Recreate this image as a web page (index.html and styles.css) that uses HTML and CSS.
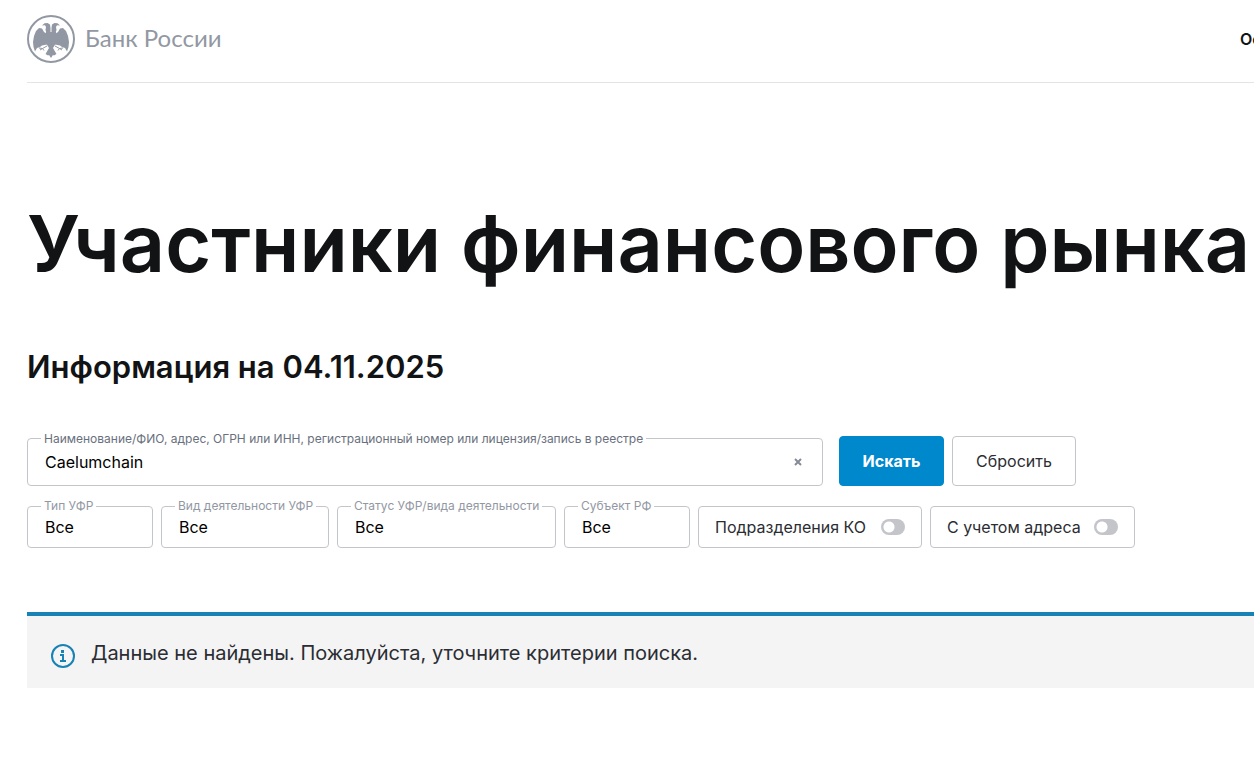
FILE: index.html
```html
<!DOCTYPE html>
<html lang="ru">
<head>
    <meta charset="UTF-8">
    <meta name="viewport" content="width=device-width, initial-scale=1.0">
    <title>Участники финансового рынка | Банк России</title>
    <link rel="stylesheet" href="styles.css">
</head>
<body>

    <header class="header">
        <a class="logo" href="#">
            <svg class="logo-icon" viewBox="0 0 48 48" aria-hidden="true">
                <circle cx="24" cy="24" r="23" fill="none" stroke="#9298a3" stroke-width="2"/>
                <g fill="#9298a3">
                    <!-- heads -->
                    <path d="M23.500 21V13l-.5-3.500-2.500-1.500-3 .2-2.500 2.300 3-.2 1 1.700-.5 3 2 6zM24.500 21V13l.5-3.500 2.500-1.500 3 .2 2.500 2.300-3-.2-1 1.700.5 3-2 6z"/>
                    <!-- wings -->
                    <path d="M20 19l-3-2-2-3.500-3-.5-3 3-2 5-1 6 .5 5 1.500 4.500 2-3.500 3-1 2-1.500 5-1zM28 19l3-2 2-3.500 3-.5 3 3 2 5 1 6-.5 5-1.500 4.500-2-3.500-3-1-2-1.500-5-1z"/>
                    <!-- body and tail -->
                    <path d="M19 17h10l1 6-1.500 6-2.500 4 3.500 6-2.500 1.500-1-.5-2 3-2-3-1 .5-2.500-1.500 3.500-6-2.500-4-1.500-6z"/>
                </g>
                <path d="M20 31l-4.500 2.500-3.500-.5M15.500 33.500L13 35M15.500 33.500l1.500 2M28 31l4.500 2.500 3.500-.5M32.500 33.500l2.500 1.500M32.500 33.500l-1.500 2" fill="none" stroke="#9298a3"/>
            </svg>
            <span class="logo-text">Банк России</span>
        </a>
        <nav class="nav">
            <a href="#">Ос</a>
        </nav>
    </header>

    <main>
        <h1>Участники финансового рынка</h1>
        <h2>Информация на 04.11.2025</h2>

        <form class="filter">
            <div class="search-row">
                <div class="field field-search">
                    <label for="search">Наименование/ФИО, адрес, ОГРН или ИНН, регистрационный номер или лицензия/запись в реестре</label>
                    <input type="text" id="search" value="Caelumchain">
                    <button type="button" class="clear" aria-label="Очистить">
                        <svg viewBox="0 0 8 8" width="8" height="8"><path d="M1 1l6 6M7 1L1 7" stroke="#858a97" stroke-width="2"/></svg>
                    </button>
                </div>
                <button type="submit" class="btn btn-primary">Искать</button>
                <button type="reset" class="btn">Сбросить</button>
            </div>

            <div class="options-row">
                <div class="field field-small">
                    <label for="type">Тип УФР</label>
                    <select id="type"><option>Все</option></select>
                </div>
                <div class="field field-medium">
                    <label for="activity">Вид деятельности УФР</label>
                    <select id="activity"><option>Все</option></select>
                </div>
                <div class="field field-large">
                    <label for="status">Статус УФР/вида деятельности</label>
                    <select id="status"><option>Все</option></select>
                </div>
                <div class="field field-small">
                    <label for="region">Субъект РФ</label>
                    <select id="region"><option>Все</option></select>
                </div>
                <label class="toggle toggle-wide">Подразделения КО <input type="checkbox"></label>
                <label class="toggle">С учетом адреса <input type="checkbox"></label>
            </div>
        </form>

        <div class="message">
            <svg class="message-icon" viewBox="0 0 24 24" aria-hidden="true">
                <circle cx="12" cy="12" r="11" fill="none" stroke="#1782b5" stroke-width="2"/>
                <path d="M10 6h3v3h-3zM9 10h4v6h2v2H9v-2h2v-4H9z" fill="#1782b5"/>
            </svg>
            <p>Данные не найдены. Пожалуйста, уточните критерии поиска.</p>
        </div>
    </main>

</body>
</html>
```

FILE: styles.css
```css
* {
    box-sizing: border-box;
}

body {
    margin: 0;
    padding-left: 27px;
    background-color: #fff;
    color: #111315;
    font-family: Inter, "Noto Sans", sans-serif;
    font-size: 16px;
    overflow-x: hidden;
}

.header {
    display: flex;
    align-items: center;
    justify-content: space-between;
    height: 83px;
    padding-bottom: 5px;
    border-bottom: 1px solid #e3e4e6;
}

.logo {
    display: flex;
    align-items: center;
    gap: 10px;
    color: #9298a3;
    text-decoration: none;
}

.logo-icon {
    width: 48px;
    height: 48px;
}

.logo-text {
    padding-bottom: 2px;
    font-family: Lato, sans-serif;
    font-size: 24px;
    line-height: 32px;
}

.nav {
    width: 14px;
    overflow: hidden;
    white-space: nowrap;
}

.nav a {
    color: #111315;
    font-size: 16px;
    font-weight: 600;
    text-decoration: none;
}

h1 {
    margin: 112px 0 0;
    font-size: 79px;
    font-weight: 600;
    line-height: 96px;
    white-space: nowrap;
}

h2 {
    margin: 56px 0 49px;
    font-size: 31px;
    font-weight: 600;
    line-height: 40px;
}

.search-row,
.options-row {
    display: flex;
    gap: 8px;
}

.search-row {
    align-items: flex-end;
    max-width: 1049px;
}

.options-row {
    flex-wrap: wrap;
    margin-top: 20px;
}

.field {
    position: relative;
    height: 42px;
}

.field-search {
    flex: 1;
    height: 48px;
    margin-right: 8px;
}

.field-small {
    width: 126px;
}

.field-medium {
    width: 168px;
}

.field-large {
    width: 219px;
}

.field label {
    position: absolute;
    top: -8px;
    left: 14px;
    padding: 0 3px;
    background-color: #fff;
    color: #9298a3;
    font-size: 12px;
    line-height: 16px;
    white-space: nowrap;
}

.field-search label {
    top: -7px;
    color: #69707d;
}

.field input,
.field select {
    width: 100%;
    height: 100%;
    padding: 0 17px;
    border: 1px solid #c4c5ca;
    border-radius: 4px;
    background-color: #fff;
    color: #000;
    font: inherit;
    appearance: none;
}

.clear {
    position: absolute;
    top: 12px;
    right: 13px;
    display: flex;
    align-items: center;
    justify-content: center;
    width: 24px;
    height: 24px;
    padding: 0;
    border: none;
    background: none;
    cursor: pointer;
}

.btn {
    width: 124px;
    height: 50px;
    padding: 0;
    border: 1px solid #c4c5ca;
    border-radius: 4px;
    background-color: #fff;
    color: #2b2d33;
    font: inherit;
    cursor: pointer;
}

.btn-primary {
    width: 105px;
    border-color: #0088cd;
    background-color: #0088cd;
    color: #fff;
    font-weight: 700;
}

.toggle {
    display: flex;
    align-items: center;
    justify-content: space-between;
    width: 205px;
    height: 42px;
    padding: 0 16px;
    border: 1px solid #c4c5ca;
    border-radius: 4px;
    color: #2b2d33;
    white-space: nowrap;
    cursor: pointer;
}

.toggle-wide {
    width: 224px;
}

.toggle input {
    width: 24px;
    height: 16px;
    margin: 0;
    border-radius: 8px;
    background: radial-gradient(circle at 8px 8px, #fff 5px, #c4c5ca 6px);
    appearance: none;
}

.message {
    display: flex;
    align-items: center;
    gap: 16px;
    height: 76px;
    margin-top: 64px;
    padding: 2px 24px 0;
    border-top: 4px solid #1782b5;
    background-color: #f4f4f4;
}

.message-icon {
    flex-shrink: 0;
    width: 24px;
    height: 24px;
    margin-top: 6px;
}

.message p {
    margin: 0;
    color: #2b2d33;
    font-size: 20px;
    line-height: 28px;
}
```
